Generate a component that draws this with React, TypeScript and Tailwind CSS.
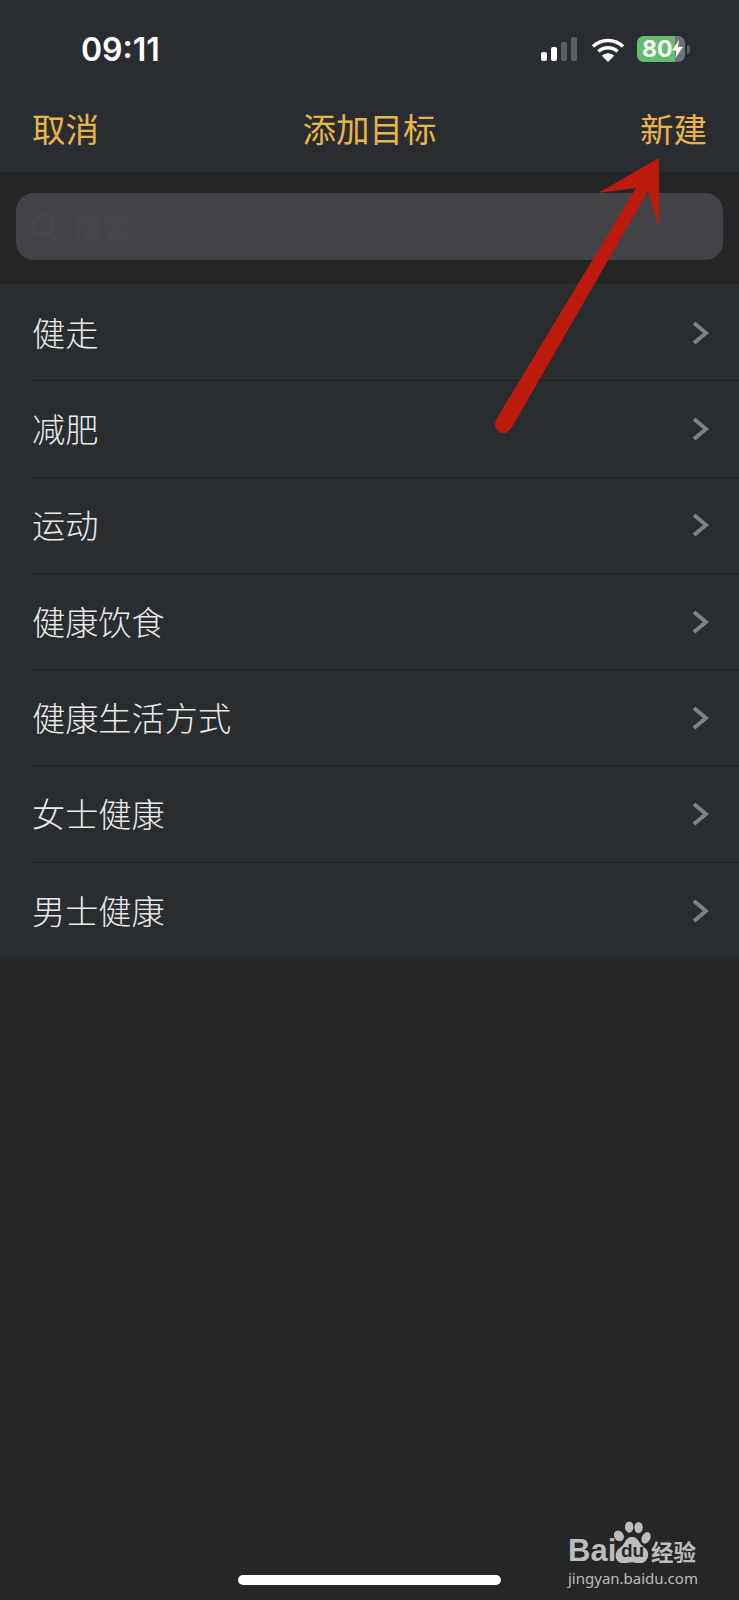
const goals = ["健走", "减肥", "运动", "健康饮食", "健康生活方式", "女士健康", "男士健康"];

const cjk = { fontFamily: '"Noto Sans CJK SC", "Noto Sans", sans-serif' };

function StatusBar() {
  return (
    <div className="flex h-[98px] items-center justify-between pl-[81px] pr-[49px]">
      <span className="pt-[2px] text-[32px] leading-[38px] font-semibold text-white" style={{ fontFamily: "Inter, sans-serif" }}>
        09:11
      </span>
      <div className="flex items-center">
        <div className="flex items-end gap-1">
          <div className="h-[9px] w-[6px] rounded-[2px] bg-white" />
          <div className="h-[14px] w-[6px] rounded-[2px] bg-white" />
          <div className="h-[19px] w-[6px] rounded-[2px] bg-[#5b5e62]" />
          <div className="h-[24px] w-[6px] rounded-[2px] bg-[#5b5e62]" />
        </div>
        <svg className="ml-[15px]" width="32" height="25" viewBox="0 0 32 25">
          <path d="M1 9.5C9.5 1.5 22.5 1.5 31 9.5" fill="none" stroke="#fff" strokeWidth="3.6" />
          <path d="M6.5 14.5C12 9.5 20 9.5 25.5 14.5" fill="none" stroke="#fff" strokeWidth="3.6" />
          <path d="M16 25L9.8 18.8C13 15.4 19 15.4 22.2 18.8Z" fill="#fff" />
        </svg>
        <div className="ml-[13px] flex items-center gap-[2px]">
          <div className="relative h-[26px] w-[48px] rounded-[7px] bg-[#6f7377]">
            <div className="h-full w-[38px] rounded-l-[7px] bg-[#62bd6c]" />
            <span
              className="absolute left-[5px] top-0 text-[23px] leading-[26px] font-bold text-white"
              style={{ fontFamily: "Inter, sans-serif" }}
            >
              80
            </span>
            <svg className="absolute left-[35px] top-[4px]" width="11" height="18" viewBox="0 0 11 18">
              <path d="M7 0L0 10.5H4.5L3.5 18L11 7H6Z" fill="#fff" />
            </svg>
          </div>
          <div className="h-[9px] w-[3px] rounded-r-full bg-[#5b5e62]" />
        </div>
      </div>
    </div>
  );
}

function NavBar() {
  return (
    <div
      className="flex h-[75px] items-start justify-between border-b border-[#1f2022] px-[32px] pt-[6px] text-[33.5px] leading-[48px] text-[#e8b449]"
      style={cjk}
    >
      <span>取消</span>
      <span>添加目标</span>
      <span>新建</span>
    </div>
  );
}

function SearchBar() {
  return (
    <div className="flex h-[111px] items-start bg-[#252628] px-4 pt-5">
      <div className="flex h-[67px] w-full items-center gap-[14px] rounded-[18px] bg-[#424347] pl-[14px]">
        <svg className="blur-[1px]" width="28" height="30" viewBox="0 0 28 30" fill="none" stroke="#47484c" strokeWidth="3">
          <circle cx="13" cy="13" r="10" />
          <path d="M20 21L27 28" />
        </svg>
        <span className="text-[30px] leading-[40px] text-[#47484c] blur-[1px]" style={cjk}>
          搜索
        </span>
      </div>
    </div>
  );
}

function GoalRow({ label, last }: { label: string; last: boolean }) {
  return (
    <div className="pl-[32px]">
      <div className={`flex h-[96.3px] items-center justify-between pr-[30px] ${last ? "" : "border-b border-[#1f2124]"}`}>
        <span className="pb-[2px] text-[33.2px] leading-[48px] font-light text-[#e8e9ea]" style={cjk}>
          {label}
        </span>
        <svg width="17" height="24" viewBox="0 0 17 24" fill="none" stroke="#7f8184" strokeWidth="4">
          <path d="M2 2L14 12L2 22" />
        </svg>
      </div>
    </div>
  );
}

function Arrow() {
  return (
    <svg className="absolute left-0 top-0" width="739" height="440" viewBox="0 0 739 440">
      <path
        d="M659 158L598 193L636 188L497 418C492 427 498 434 505 433C508 432 510 430 512 427L648 191L659 228Z"
        fill="#bb1a0c"
      />
    </svg>
  );
}

function Watermark() {
  return (
    <div className="absolute left-[566px] top-[1518px] w-[136px]">
      <div className="relative h-[50px]">
        <span
          className="absolute left-[2px] top-[17px] text-[31px] leading-[32px] font-bold text-[#bdbdbd]"
          style={{ fontFamily: '"Liberation Sans", sans-serif' }}
        >
          Bai
        </span>
        <svg className="absolute left-[46px] top-[3px]" width="40" height="43" viewBox="0 0 40 46" fill="#bdbdbd">
          <ellipse cx="17" cy="6.5" rx="4.5" ry="6" />
          <ellipse cx="27" cy="7" rx="4.5" ry="6" />
          <ellipse cx="6" cy="16" rx="5" ry="6" transform="rotate(-35 6 16)" />
          <ellipse cx="35" cy="18" rx="4.5" ry="6.5" transform="rotate(25 35 18)" />
          <path d="M20 17C27 17 27 24 33 28C41 33 37 46 28 45C24 45 23 44 20 44C16 44 15 45 11 45C2 46 -1 33 8 28C13 24 13 17 20 17Z" />
        </svg>
        <span
          className="absolute left-[55px] top-[23px] text-[19px] leading-[20px] font-bold text-[#252628]"
          style={{ fontFamily: '"Liberation Sans", sans-serif' }}
        >
          du
        </span>
        <span className="absolute left-[85px] top-[19px] text-[22.5px] leading-[28px] font-bold text-[#bdbdbd]" style={cjk}>
          经验
        </span>
      </div>
      <div
        className="pl-[2px] text-[15px] leading-[20px] whitespace-nowrap text-[#bdbdbd]"
        style={{ fontFamily: '"Noto Sans", sans-serif' }}
      >
        jingyan.baidu.com
      </div>
    </div>
  );
}

export default function App() {
  return (
    <div className="relative flex h-[1600px] w-[739px] flex-col overflow-hidden bg-[#252628]">
      <div className="bg-[#292c30]">
        <StatusBar />
        <NavBar />
      </div>
      <SearchBar />
      <div className="border-t border-[#2e3134] bg-[#2a2d30]">
        {goals.map((g, i) => (
          <GoalRow key={g} label={g} last={i === goals.length - 1} />
        ))}
      </div>
      <div className="flex flex-1 items-end justify-center pb-[15px]">
        <div className="h-[10px] w-[263px] rounded-full bg-white" />
      </div>
      <Arrow />
      <Watermark />
    </div>
  );
}
